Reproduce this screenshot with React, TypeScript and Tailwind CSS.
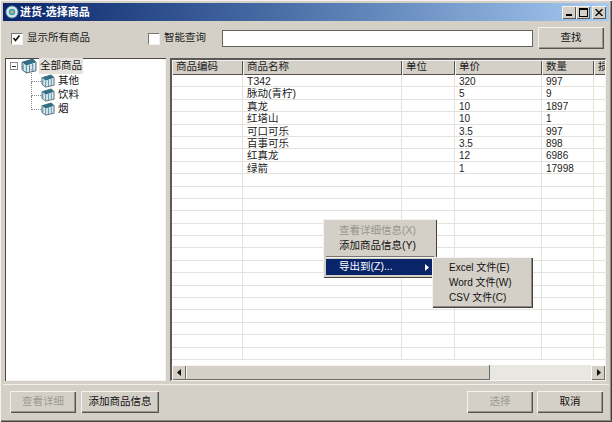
const font = { fontFamily: '"Liberation Sans","Noto Sans CJK SC",sans-serif' };

const rows: string[][] = [
  ['', 'T342', '', '320', '997'],
  ['', '脉动(青柠)', '', '5', '9'],
  ['', '真龙', '', '10', '1897'],
  ['', '红塔山', '', '10', '1'],
  ['', '可口可乐', '', '3.5', '997'],
  ['', '百事可乐', '', '3.5', '898'],
  ['', '红真龙', '', '12', '6986'],
  ['', '绿箭', '', '1', '17998'],
  ...Array.from({ length: 15 }, () => ['', '', '', '', '']),
];

const colW = ['w-[71px]', 'w-[159px]', 'w-[53px]', 'w-[87px]', 'w-[52px]', 'w-[14px]'];
const heads = ['商品编码', '商品名称', '单位', '单价', '数量', '损'];

function Btn({ label, w, disabled }: { label: string; w: string; disabled?: boolean }) {
  return (
    <div
      className={`${w} h-[22px] flex items-center justify-center bg-[#d4d0c8] text-[10.5px] whitespace-nowrap shadow-[inset_1px_1px_0_#f4f3ef,inset_-1px_-1px_0_#55534e,inset_-2px_-2px_0_#9a978f] ${
        disabled ? 'text-[#9c9a94]' : 'text-[#111]'
      }`}
    >
      {label}
    </div>
  );
}

function Check({ on }: { on?: boolean }) {
  return (
    <div className="w-[11px] h-[11px] shrink-0 bg-white flex items-center justify-center shadow-[inset_1px_1px_0_#77756f,1px_1px_0_#f0efea]">
      {on && (
        <svg width="9" height="9" viewBox="0 0 9 9">
          <path d="M1.5 4 L3.5 6.5 L7.5 1.5" fill="none" stroke="#111" strokeWidth="1.6" />
        </svg>
      )}
    </div>
  );
}

function BoxIcon({ size = 15 }: { size?: number }) {
  return (
    <svg width={size} height={size} viewBox="0 0 15 15" className="shrink-0">
      <path d="M1 4 L11 1 L14 4 L14 12 L5 14 L1 11 Z" fill="#dfe8ee" stroke="#31465a" strokeWidth="0.8" />
      <path d="M1 4 L11 1 L14 4 L5 7 Z" fill="#2f6f83" />
      <path d="M5 7 L5 14 M2 6 V11 M8 6.5 V13 M11 5.5 V12" stroke="#4d8fa3" strokeWidth="1" fill="none" />
    </svg>
  );
}

function ScrollBtn({ dir }: { dir: 'l' | 'r' }) {
  return (
    <div className="w-[14px] h-full shrink-0 flex items-center justify-center bg-[#d4d0c8] shadow-[inset_1px_1px_0_#fbfaf7,inset_-1px_-1px_0_#6e6c67]">
      <svg width="5" height="7" viewBox="0 0 5 7">
        <path d={dir === 'l' ? 'M4 0 V7 L0 3.5 Z' : 'M1 0 V7 L5 3.5 Z'} fill="#111" />
      </svg>
    </div>
  );
}

function WinBtn({ children }: { children: React.ReactNode }) {
  return (
    <div className="w-[14px] h-[13px] flex items-center justify-center bg-[#d4d0c8] shadow-[inset_1px_1px_0_#f4f3ef,inset_-1px_-1px_0_#5a5853]">
      {children}
    </div>
  );
}

function TreeChild({ label, first }: { label: string; first?: boolean }) {
  return (
    <div className="flex items-center h-[14px] relative">
      <div className={`ml-[26px] w-[10px] ${first ? 'h-[13px] -mt-[12px]' : 'h-[14px] -mt-[13px]'} border-l border-b border-dotted border-[#8a8a8a]`} />
      <BoxIcon size={14} />
      <span className="ml-[3px] text-[10.5px] text-[#111]">{label}</span>
    </div>
  );
}

function MenuItem({ label, disabled, small }: { label: React.ReactNode; disabled?: boolean; small?: boolean }) {
  return (
    <div className={`h-[15px] flex items-center ${small ? 'text-[10px]' : 'text-[10.5px]'} whitespace-nowrap ${disabled ? 'text-[#98958e]' : 'text-[#111]'}`}>{label}</div>
  );
}

export default function App() {
  return (
    <div
      style={font}
      className="relative w-[612px] h-[422px] flex flex-col overflow-hidden bg-[#d4d0c8] pt-[3px] px-[3px] pb-[3px] shadow-[inset_1px_1px_0_#f4f3ef,inset_-1px_-1px_0_#44423f,inset_-2px_-2px_0_#8d8a84]"
    >
      {/* title bar */}
      <div className="h-[18px] shrink-0 flex items-center pl-[2px] pr-[3px] bg-gradient-to-r from-[#0a246a] to-[#a6caf0]">
        <svg width="14" height="14" viewBox="0 0 15 15" className="shrink-0">
          <circle cx="7.5" cy="7.5" r="6.5" fill="#d9e8ea" stroke="#5f8b9c" />
          <circle cx="7.5" cy="7.5" r="3.5" fill="#3f9fc0" />
          <circle cx="7.5" cy="7.5" r="1.6" fill="#d7b64a" />
        </svg>
        <span className="ml-[1px] text-[11px] font-bold text-white whitespace-nowrap">进货-选择商品</span>
        <div className="ml-auto flex items-center">
          <WinBtn>
            <div className="w-[6px] h-[2px] bg-black mt-[6px] -ml-[1px]" />
          </WinBtn>
          <WinBtn>
            <div className="w-[9px] h-[9px] border border-black border-t-2" />
          </WinBtn>
          <div className="ml-[2px]">
            <WinBtn>
              <svg width="8" height="7" viewBox="0 0 8 7">
                <path d="M0.5 0 L7.5 7 M7.5 0 L0.5 7" stroke="#111" strokeWidth="1.5" />
              </svg>
            </WinBtn>
          </div>
        </div>
      </div>

      {/* toolbar */}
      <div className="h-[37px] shrink-0 flex items-center whitespace-nowrap">
        <div className="ml-[8px] mt-[-3px]"><Check on /></div>
        <span className="ml-[5px] w-[64px] shrink-0 text-[10.5px] text-[#222] mt-[-3px]">显示所有商品</span>
        <div className="ml-[57px] mt-[-3px]"><Check /></div>
        <span className="ml-[5px] w-[42px] shrink-0 text-[10.5px] text-[#222] mt-[-3px]">智能查询</span>
        <div className="ml-[16px] mt-[-3px] w-[311px] h-[17px] shrink-0 bg-white shadow-[inset_1px_1px_0_#66645f,inset_-1px_-1px_0_#66645f]" />
        <div className="ml-[5px] mt-[-4px]"><Btn label="查找" w="w-[66px]" /></div>
      </div>

      {/* panels */}
      <div className="flex-1 min-h-0 flex pl-[2px] pr-[3px] gap-[4px]">
        <div className="w-[161px] h-[323px] bg-white shadow-[inset_1px_1px_0_#4a4845,inset_-1px_-1px_0_#f4f3ef] pt-[1px]">
          <div className="flex items-center h-[14px]">
            <div className="ml-[5px] w-[8px] h-[8px] border border-[#8a8a8a] flex items-center justify-center">
              <div className="w-[4px] h-[1px] bg-[#333]" />
            </div>
            <div className="ml-[3px]"><BoxIcon size={16} /></div>
            <span className="ml-[2px] px-[1px] text-[10.5px] bg-[#e4e2dc] text-[#111]">全部商品</span>
          </div>
          <div className="pt-[1px]">
            <TreeChild label="其他" first />
            <TreeChild label="饮料" />
            <TreeChild label="烟" />
          </div>
        </div>

        <div className="w-[436px] h-[323px] flex flex-col bg-white overflow-hidden border-l-2 border-t-2 border-[#5b5955] border-r border-b border-r-[#f4f3ef] border-b-[#f4f3ef]">
          <div className="h-[15px] shrink-0 flex bg-[#d4d0c8]">
            {heads.map((h, i) => (
              <div
                key={i}
                className={`${colW[i]} shrink-0 overflow-hidden whitespace-nowrap pl-[4px] text-[10.5px] leading-[13px] text-[#222] shadow-[inset_1px_1px_0_#f4f3ef,inset_-1px_-1px_0_#55534e]`}
              >
                {i === 5 ? <span className="block w-[9px] overflow-hidden">{h}</span> : h}
              </div>
            ))}
          </div>
          <div className="flex-1 min-h-0 overflow-hidden">
            {rows.map((r, i) => (
              <div key={i} className="h-[12.4px] flex border-b border-[#e4e2dc]">
                {r.map((c, j) => (
                  <div
                    key={j}
                    className={`${colW[j]} shrink-0 overflow-hidden border-r border-[#e4e2dc] pl-[4px] pt-[1px] ${j >= 3 ? 'text-[10px]' : 'text-[10.5px]'} leading-[11px] whitespace-nowrap text-[#222]`}
                  >
                    {c}
                  </div>
                ))}
                <div className={`${colW[5]} shrink-0`} />
              </div>
            ))}
          </div>
          <div className="h-[15px] shrink-0 flex bg-[#e9e7e2]">
            <ScrollBtn dir="l" />
            <div className="w-[304px] h-full bg-[#d4d0c8] shadow-[inset_-1px_-1px_0_#6e6c67,inset_1px_1px_0_#f4f3ef]" />
            <div className="flex-1" />
            <ScrollBtn dir="r" />
          </div>
        </div>
      </div>

      {/* bottom bar */}
      <div className="h-[34px] shrink-0 flex items-center border-t border-[#f0efea] pl-[7px] pr-[5px] mb-[1px]">
        <Btn label="查看详细" w="w-[66px]" disabled />
        <div className="ml-[5px]"><Btn label="添加商品信息" w="w-[78px]" /></div>
        <div className="ml-auto"><Btn label="选择" w="w-[66px]" disabled /></div>
        <div className="ml-[4px] mr-[1px]"><Btn label="取消" w="w-[66px]" /></div>
      </div>

      {/* context menu */}
      <div className="absolute left-[323px] top-[219px] w-[114px] h-[59px] bg-[#d4d0c8] pt-[3px] px-[3px] shadow-[inset_1px_1px_0_#f4f3ef,inset_-1px_-1px_0_#44423f]">
        <div className="pl-[13px] pt-[1px]">
          <MenuItem label="查看详细信息(X)" disabled />
          <MenuItem label="添加商品信息(Y)" />
        </div>
        <div className="mt-[3px] h-[2px] border-t border-[#77756f] border-b-0 bg-[#f4f3ef]" />
        <div className="mt-[1px] h-[16px] w-[106px] bg-[#0a246a] text-white text-[10.5px] flex items-center pl-[13px]">
          <span>导出到(Z)...</span>
          <svg width="4" height="7" viewBox="0 0 4 7" className="ml-auto mr-[3px]">
            <path d="M0 0 V7 L4 3.5 Z" fill="#fff" />
          </svg>
        </div>
      </div>
      <div className="absolute left-[432px] top-[257px] w-[101px] h-[51px] bg-[#d4d0c8] pl-[17px] pt-[3px] shadow-[inset_1px_1px_0_#f4f3ef,inset_-1px_-1px_0_#44423f,inset_-2px_-2px_0_#8d8a84]">
        <MenuItem small label="Excel 文件(E)" />
        <MenuItem small label="Word 文件(W)" />
        <MenuItem small label="CSV 文件(C)" />
      </div>
    </div>
  );
}
